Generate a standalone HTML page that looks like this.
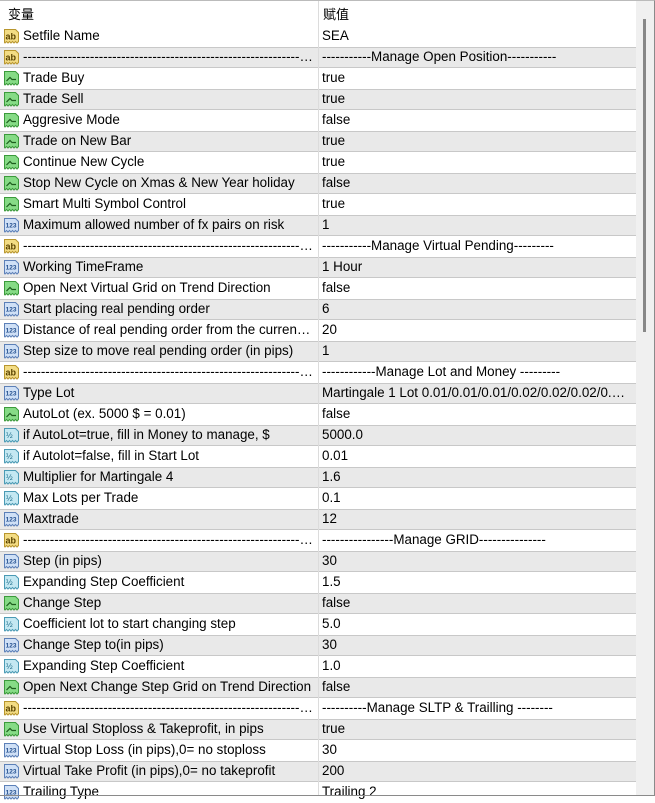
<!DOCTYPE html>
<html><head><meta charset="utf-8"><style>
*{margin:0;padding:0;box-sizing:border-box}
body{width:655px;height:796px;overflow:hidden;background:#fff;font-family:"Liberation Sans","Noto Sans CJK SC",sans-serif;font-size:13.4px;color:#000;position:relative}
.frame{position:absolute;left:0;top:0;width:655px;height:796px;border-right:1px solid #8a8a8a;border-bottom:1px solid #8a8a8a;border-top:1px solid #bbb}
.hdr{position:absolute;left:0;top:0;width:636px;height:26px;background:#fff}
.hdr span{position:absolute;top:4px;font-size:13px}
.row{position:absolute;left:0;width:636px;height:21px}
.g{background:#e9e9e9;border-top:1px solid #c8c8c8;border-bottom:1px solid #c8c8c8}
.ic{position:absolute;left:3px;top:2px;width:17px;height:16px}
.n{position:absolute;left:23px;top:2px;width:291px;white-space:nowrap;overflow:hidden;text-overflow:ellipsis}
.g .n,.g .v{top:1px}
.g .ic{top:1px}
.v{position:absolute;left:322px;top:2px;width:310px;white-space:nowrap;overflow:hidden;text-overflow:ellipsis}
.div{position:absolute;left:318px;top:0;width:1px;height:796px;background:#dcdcdc}
.sb{position:absolute;left:636px;top:1px;width:18px;height:794px;background:#f0f0f0}
.th{position:absolute;left:643px;top:19px;width:3px;height:313px;background:#888}
</style></head><body>
<div class="hdr"><span style="left:8px">变量</span><span style="left:323px">赋值</span></div>
<div id="rows"></div>
<div class="div"></div>
<div class="sb"></div><div class="th"></div>
<div class="frame"></div>
<script>
var D='-------------------------------------------------------------------------------';
var rows=[
['a','Setfile Name','SEA'],
['a',D,'-----------Manage Open Position-----------'],
['b','Trade Buy','true'],['b','Trade Sell','true'],['b','Aggresive Mode','false'],['b','Trade on New Bar','true'],['b','Continue New Cycle','true'],['b','Stop New Cycle on Xmas & New Year holiday','false'],['b','Smart Multi Symbol Control','true'],
['i','Maximum allowed number of fx pairs on risk','1'],
['a',D,'-----------Manage Virtual Pending---------'],
['i','Working TimeFrame','1 Hour'],['b','Open Next Virtual Grid on Trend Direction','false'],['i','Start placing real pending order','6'],['i','Distance of real pending order from the current price','20'],['i','Step size to move real pending order (in pips)','1'],
['a',D,'------------Manage Lot and Money ---------'],
['i','Type Lot','Martingale 1 Lot 0.01/0.01/0.01/0.02/0.02/0.02/0.03/0.03'],['b','AutoLot (ex. 5000 $ = 0.01)','false'],['d','if AutoLot=true, fill in Money to manage, $','5000.0'],['d','if Autolot=false, fill in Start Lot','0.01'],['d','Multiplier for Martingale 4','1.6'],['d','Max Lots per Trade','0.1'],['i','Maxtrade','12'],
['a',D,'----------------Manage GRID---------------'],
['i','Step (in pips)','30'],['d','Expanding Step Coefficient','1.5'],['b','Change Step','false'],['d','Coefficient lot to start changing step','5.0'],['i','Change Step to(in pips)','30'],['d','Expanding Step Coefficient','1.0'],['b','Open Next Change Step Grid on Trend Direction','false'],
['a',D,'----------Manage SLTP & Trailling --------'],
['b','Use Virtual Stoploss & Takeprofit, in pips','true'],['i','Virtual Stop Loss (in pips),0= no stoploss','30'],['i','Virtual Take Profit (in pips),0= no takeprofit','200'],['i','Trailing Type','Trailing 2']];
var sh='M1.5 1.5H12.5L15.5 4.5V13.5L14 15L12.5 13.5L11 15L9.5 13.5L8 15L6.5 13.5L5 15L3.5 13.5L2 15L1.5 14.5Z';
function icon(t){
 if(t=='a')return '<svg class="ic" viewBox="0 0 17 16"><path d="'+sh+'" fill="#f3dc84" stroke="#b8962e"/><text x="2.5" y="11.5" font-family="Liberation Sans" font-size="9" font-weight="bold" fill="#5a4300">ab</text></svg>';
 if(t=='b')return '<svg class="ic" viewBox="0 0 17 16"><path d="'+sh+'" fill="#86db86" stroke="#3b9a3b"/><path d="M3.5 11L7 7.5L9 9.5H13" fill="none" stroke="#1d5d1d" stroke-width="1.2"/></svg>';
 if(t=='i')return '<svg class="ic" viewBox="0 0 17 16"><path d="'+sh+'" fill="#cfe0f6" stroke="#5c80b8"/><text x="2.6" y="10.5" font-family="Liberation Sans" font-size="6.5" font-weight="bold" fill="#24508f">123</text></svg>';
 return '<svg class="ic" viewBox="0 0 17 16"><path d="'+sh+'" fill="#c4e8f2" stroke="#4a9ab4"/><text x="3" y="11" font-family="Liberation Sans" font-size="8" fill="#1d6d8a">½</text></svg>';
}
var h='';
rows.forEach(function(r,i){
 h+='<div class="row'+(i%2?' g':'')+'" style="top:'+(26+21*i)+'px">'+icon(r[0])+'<div class="n">'+r[1].replace(/&/g,'&amp;')+'</div><div class="v">'+r[2].replace(/&/g,'&amp;')+'</div></div>';
});
document.getElementById('rows').innerHTML=h;
</script>
</body></html>
